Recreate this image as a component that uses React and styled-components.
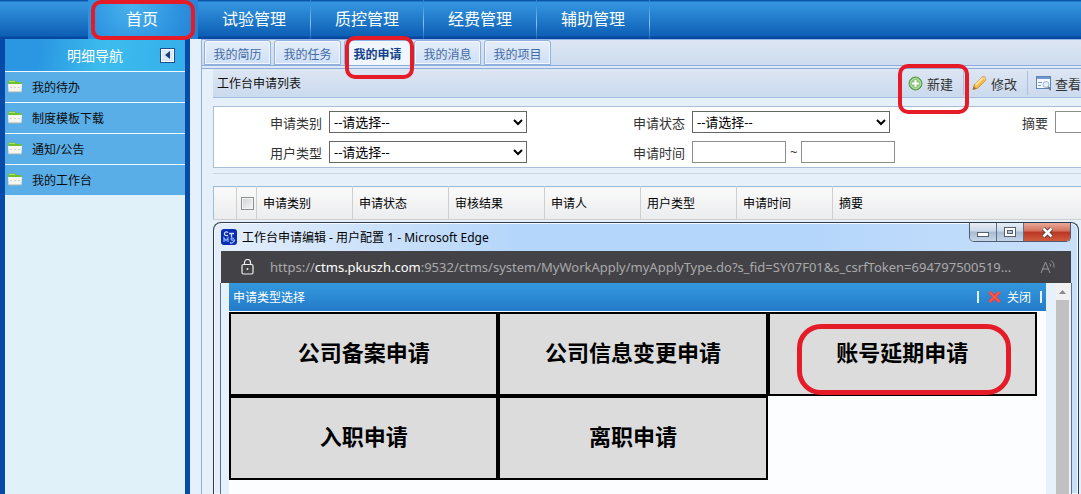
import React from "react";
import styled, { createGlobalStyle, css } from "styled-components";

const GlobalStyle = createGlobalStyle`
    * {
        box-sizing: border-box;
    }
    body {
        margin: 0;
        overflow: hidden;
        font-family: "Noto Sans", "Noto Sans CJK SC", sans-serif;
        font-size: 12px;
        color: #111;
    }
    button, input, select {
        font-family: inherit;
        margin: 0;
    }
`;

const Page = styled.div`
    position: relative;
    display: flex;
    flex-direction: column;
    height: 100vh;
    overflow: hidden;
    background: #e6f0fa;
`;

// hand drawn red frame around the thing to click
const Mark = styled.span`
    position: absolute;
    z-index: 5;
    inset: ${({ $inset }) => $inset};
    border: ${({ $wide }) => ($wide ? "5px" : "4px")} solid #e51c28;
    border-radius: ${({ $wide }) => ($wide ? "24px" : "10px")};
    pointer-events: none;
`;

/* top navigation */

const TopNav = styled.nav`
    display: flex;
    flex: none;
    height: 39px;
    padding-left: 88px;
    background: linear-gradient(#0a56a8 0, #0a56a8 1px, #3595e0 2px, #2580cf 16px, #0d5fb4 36px, #0847a0 37px);
`;

const TopLink = styled.a`
    position: relative;
    display: flex;
    align-items: center;
    justify-content: center;
    width: 113px;
    padding-bottom: 4px;
    font-size: 16px;
    color: #fff;
    text-decoration: none;
    border-right: 1px solid #5da4dd;
    border-image: linear-gradient(#2580cf, #8cc2ec 60%, #0d5fb4) 1;
    ${({ $active }) =>
        $active &&
        css`
            width: 110px;
            padding-right: 2px;
            border: 0;
            background: radial-gradient(circle at 40% 10%, #48b4ee, #2e93e0 60%, #237fd2);
        `}
`;

const Body = styled.div`
    display: flex;
    flex: 1;
    min-height: 0;
`;

/* side menu */

const Side = styled.aside`
    flex: none;
    width: 190px;
    background: #e1f1fa;
    border: solid #064ba9;
    border-width: 0 5px;
`;

const SideHead = styled.div`
    display: flex;
    align-items: center;
    height: 32px;
    padding: 0 10px 0 62px;
    font-size: 14px;
    color: #fff;
    background: linear-gradient(100deg, #2b97e2 20%, #3cbdee 55%, #35aeea 100%);
`;

const Fold = styled.button`
    display: flex;
    align-items: center;
    justify-content: center;
    width: 15px;
    height: 15px;
    margin-left: auto;
    padding: 0;
    background: #d9e9fa;
    border: 1px solid #1c4f8c;
    box-shadow: inset 0 0 0 1px #fff;
`;

const SideList = styled.ul`
    margin: 0;
    padding: 0;
    list-style: none;
`;

const SideLink = styled.a`
    display: flex;
    align-items: center;
    gap: 9px;
    height: 31px;
    padding-left: 3px;
    color: #0b0b0b;
    text-decoration: none;
    background: #5aaee8;
    border-top: 1px solid #f2f9fe;
`;

/* work area */

const Main = styled.main`
    flex: 1;
    min-width: 0;
    margin-left: 11px;
    border-left: 1px solid #8fb0db;
`;

const Tabs = styled.div`
    display: flex;
    align-items: flex-end;
    gap: 3px;
    height: 30px;
    padding: 0 2px 3px;
    border-top: 1px solid #8fb5ea;
    border-bottom: 1px solid #8fabd8;
    background: linear-gradient(#dde6f3, #cddcef 25px, #8fabd8 25px, #8fabd8 26px, #dce9f8 26px);
`;

const Tab = styled.button`
    position: relative;
    width: 67px;
    height: 25px;
    padding: 2px 0 0;
    font-size: 12px;
    color: #416aa3;
    background: linear-gradient(#e5eefa, #cfe0f7);
    border: 1px solid #8fb0e0;
    border-radius: 3px 3px 0 0;
    box-shadow: inset 0 0 0 1px #f3f8fe;
    ${({ $active }) =>
        $active &&
        css`
            font-weight: 700;
            color: #15428b;
            background: #f0f6fe;
            border-bottom-color: #f0f6fe;
        `}
`;

const Panel = styled.section`
    margin: 0 -11px 0 11px;
`;

const Toolbar = styled.div`
    display: flex;
    align-items: center;
    height: 29px;
    padding-left: 4px;
    background: linear-gradient(#dde6f3, #cbdaee);
    border-bottom: 1px solid #a3bcdf;
`;

const Actions = styled.div`
    display: flex;
    align-items: center;
    margin-left: auto;
`;

const ToolButton = styled.button`
    position: relative;
    display: flex;
    align-items: center;
    gap: 4px;
    width: 64px;
    height: 24px;
    padding: 0 0 0 8px;
    font-size: 13px;
    white-space: nowrap;
    color: #333;
    background: none;
    border: 0;
    border-right: 1px solid #a9c0df;
    svg {
        flex: none;
    }
`;

const Filters = styled.form`
    display: grid;
    grid-template-columns: repeat(3, 363px);
    row-gap: 8px;
    margin-top: 8px;
    padding: 4px 0 4px;
    font-size: 13px;
    color: #333;
    background: #fff;
    border: 1px solid #a9bfd8;
    overflow: hidden;
`;

const Field = styled.div`
    display: flex;
    align-items: center;
    gap: 7px;
    height: 22px;
    label {
        width: 108px;
        text-align: right;
    }
`;

const Select = styled.select`
    width: 198px;
    height: 22px;
    padding: 0;
    font-size: 13px;
    color: #000;
    background: #fff;
    border: 1px solid #666;
    border-radius: 0;
`;

const TextBox = styled.input`
    width: ${({ $wide }) => ($wide ? "198px" : "94px")};
    height: 22px;
    border: 1px solid #8d8d8d;
`;

const Range = styled.div`
    display: flex;
    align-items: center;
    gap: 4px;
`;

const Rule = styled.hr`
    height: 1px;
    margin: 5px 0 12px;
    background: #cbd5de;
    border: 0;
`;

const Grid = styled.table`
    width: 100%;
    table-layout: fixed;
    border-collapse: collapse;
    border-top: 1px solid #9dbbdd;
    border-left: 1px solid #9dbbdd;
    th {
        height: 33px;
        padding: 0 0 0 6px;
        font-weight: 400;
        text-align: left;
        color: #000;
        background: linear-gradient(#fafafa, #ebecee);
        border-right: 1px solid #cfcfcf;
        border-bottom: 1px solid #cfcfcf;
    }
`;

const Col = styled.col`
    width: ${({ $w }) => $w};
`;

const Check = styled.input`
    display: block;
    appearance: none;
    width: 13px;
    height: 13px;
    margin: 0 0 0 -2px;
    background: linear-gradient(135deg, #cfd3d6, #f6f6f6);
    border: 1px solid #8e8f8f;
    box-shadow: inset 0 0 0 1px #f4f4f4;
`;

/* popup browser window */

const Popup = styled.section`
    position: absolute;
    z-index: 2;
    top: 222px;
    right: 2px;
    bottom: 0;
    left: 213px;
    display: flex;
    flex-direction: column;
    padding: 0 7px;
    background: linear-gradient(90deg, #e4eefa, #b5d6fb 35%, #b5d6fb 70%, #c9e0fa);
    border: 1px solid #2f3c4d;
    border-bottom: 0;
    border-radius: 8px 8px 0 0;
    box-shadow: inset 0 0 0 1px #f2f8fe;
`;

const TitleBar = styled.header`
    display: flex;
    flex: none;
    align-items: center;
    gap: 5px;
    height: 28px;
    color: #000;
    white-space: nowrap;
`;

const WinButtons = styled.div`
    display: flex;
    align-self: flex-start;
    margin-left: auto;
    border: 1px solid #4e5d70;
    border-top: 0;
    border-radius: 0 0 5px 5px;
    overflow: hidden;
`;

const WinButton = styled.button`
    display: flex;
    align-items: center;
    justify-content: center;
    width: ${({ $close }) => ($close ? "46px" : "27px")};
    height: 18px;
    padding: 0;
    border: 0;
    border-right: ${({ $close }) => ($close ? "0" : "1px solid #5f6d80")};
    background: ${({ $close }) =>
        $close
            ? "linear-gradient(#e8a99a, #d4705c 45%, #b93624 50%, #cf5a3d)"
            : "linear-gradient(#e6edf6, #cbd8e8 45%, #a9bbd1 50%, #c6d6e9)"};
`;

const Address = styled.div`
    display: flex;
    flex: none;
    align-items: center;
    height: 32px;
    padding: 0 14px 0 20px;
    font-size: 13px;
    color: #a9a9ab;
    background: #434347;
    svg {
        flex: none;
    }
    b {
        font-weight: 400;
        color: #fff;
    }
`;

const Url = styled.span`
    flex: 1;
    min-width: 0;
    margin-left: 15px;
    white-space: nowrap;
`;

const View = styled.div`
    display: flex;
    flex: 1;
    min-height: 0;
    margin: 0 -1px;
    padding-left: 8px;
    background: #e6f1fb;
    border: solid #5b7289;
    border-width: 0 1px;
`;

const Sheet = styled.div`
    flex: 1;
    background: #fbfdff;
`;

const SheetHead = styled.div`
    display: flex;
    align-items: center;
    height: 28px;
    padding: 0 4px;
    color: #fff;
    background: linear-gradient(#3398dd, #247bc9);
`;

const CloseGroup = styled.div`
    display: flex;
    align-items: center;
    gap: 9px;
    margin-left: auto;
`;

const CloseButton = styled.button`
    display: flex;
    align-items: center;
    gap: 6px;
    padding: 0;
    font-size: 12px;
    color: #fff;
    background: none;
    border: 0;
`;

const Bar = styled.i`
    width: 2px;
    height: 12px;
    background: #e8f3fc;
`;

const Tiles = styled.div`
    display: grid;
    grid-template-columns: repeat(3, 1fr);
    margin: 1px 9px 0 0;
`;

const Tile = styled.button`
    position: relative;
    height: 84px;
    padding: 0 0 6px;
    font-size: 22px;
    font-weight: 700;
    color: #000;
    background: #dcdcdc;
    border: 2px solid #000;
`;

const Scroll = styled.div`
    display: flex;
    flex: none;
    flex-direction: column;
    gap: 6px;
    width: 15px;
    margin-left: 10px;
    padding: 7px 2px 0 0;
    background: #f1f1f1;
    svg {
        align-self: center;
    }
`;

const Thumb = styled.div`
    flex: 1;
    background: #c1c1c1;
`;

const FolderIcon = () => (
    <svg width="15" height="16" viewBox="0 0 15 16">
        <path d="M0.500 1.500h7l1 1.500h5V7h-13z" fill="#6fbf2e" />
        <path d="M1 2h6v1H1z" fill="#a9e066" />
        <path d="M0 5h14l-.5 8h-13z" fill="#f6f5ee" />
        <path d="M1 13h13" stroke="#9db3b8" />
        <path d="M2 8.500h2M6 8.500h2M10 8.500h2" stroke="#dccfd0" />
    </svg>
);

const AddIcon = () => (
    <svg width="15" height="15" viewBox="0 0 15 15">
        <circle cx="7.5" cy="7.5" r="6.500" fill="#6db35a" stroke="#5a9a4c" />
        <circle cx="7.5" cy="7.5" r="5" fill="#86c573" stroke="#c4e6b8" />
        <path d="M7.500 4v7M4 7.500h7" stroke="#fff" strokeWidth="2" />
    </svg>
);

const PencilIcon = () => (
    <svg width="15" height="16" viewBox="0 0 16 16">
        <path d="M1 15l1.500-5L11 1.500q2-1 3 .5t.5 3L6 13.500z" fill="#f5bd49" stroke="#c98624" />
        <path d="M4 10l7.500-7.500" stroke="#ffe7a0" strokeWidth="2" />
        <path d="M10.500 2.500l3 3 1.500-2-2.500-2.500z" fill="#f3c98f" />
        <path d="M1 15l1-3.500 2.500 2.500z" fill="#8a7152" />
    </svg>
);

const ViewIcon = () => (
    <svg width="15" height="15" viewBox="0 0 15 15">
        <rect x="0.500" y="0.500" width="14" height="12" fill="#f5f9fe" stroke="#5b83b8" />
        <path d="M1 1h13v2H1z" fill="#6f9bd0" />
        <path d="M2 6.500h4M2 9.500h3" stroke="#7d9fcb" />
        <circle cx="10" cy="8.500" r="3" fill="#e4effa" stroke="#9fb4cc" />
        <path d="M12 11l3 3" stroke="#6f7c8e" strokeWidth="2" />
    </svg>
);

const LogoIcon = () => (
    <svg width="16" height="16" viewBox="0 0 16 16">
        <rect width="16" height="16" rx="3" fill="#0a2cb0" />
        <path d="M7 3.500Q4 2 3.500 4.500T7 6.500M8 4.500h5M10.500 4.500v4" fill="none" stroke="#cfe0ff" strokeWidth="1.300" />
        <path d="M3 13V9l2 2.500L7 9v4M13 9.500q-3-1-3 .5t2.500 1-.5 2.200-2.500-.4" fill="none" stroke="#8fb4f8" strokeWidth="1.200" />
    </svg>
);

const LockIcon = () => (
    <svg width="14" height="16" viewBox="0 0 14 16" fill="none" stroke="#f0f0f0" strokeWidth="1.200">
        <rect x="1" y="5.500" width="11" height="9.500" rx="1.500" />
        <path d="M3.500 5.500V3.500a3 3 0 0 1 6 0v2" />
        <circle cx="6.500" cy="10" r="1" fill="#f0f0f0" stroke="none" />
    </svg>
);

const ReadIcon = () => (
    <svg width="17" height="16" viewBox="0 0 17 16" fill="none" stroke="#98989b">
        <path d="M1 14L5.500 3 10 14M2.500 10h6" />
        <path d="M9.500 4.500q1.500 1 1 3M11 1.500q4 2.500 3 7" />
    </svg>
);

const CrossIcon = () => (
    <svg width="13" height="12" viewBox="0 0 13 12">
        <path d="M1.500 1l10 10M11.500 1l-10 10" stroke="#f0403c" strokeWidth="3.500" />
        <path d="M1.500 1l10 10M11.500 1l-10 10" stroke="#ff6f62" strokeWidth="1" />
    </svg>
);

const topItems = ["首页", "试验管理", "质控管理", "经费管理", "辅助管理"];
const sideItems = ["我的待办", "制度模板下载", "通知/公告", "我的工作台"];
const tabItems = ["我的简历", "我的任务", "我的申请", "我的消息", "我的项目"];
const columns = ["申请类别", "申请状态", "审核结果", "申请人", "用户类型", "申请时间", "摘要"];
const applyTypes = ["公司备案申请", "公司信息变更申请", "账号延期申请", "入职申请", "离职申请"];

function SelectField({ id, label }) {
    return (
        <Field>
            <label htmlFor={id}>{label}</label>
            <Select id={id}>
                <option>--请选择--</option>
            </Select>
        </Field>
    );
}

function ApplyWindow() {
    return (
        <Popup>
            <TitleBar>
                <LogoIcon />
                <span>工作台申请编辑 - 用户配置 1 - Microsoft Edge</span>
                <WinButtons>
                    <WinButton aria-label="最小化">
                        <svg width="12" height="9" viewBox="0 0 12 9">
                            <rect x="0.500" y="4.500" width="11" height="4" fill="#fff" stroke="#555f6e" />
                        </svg>
                    </WinButton>
                    <WinButton aria-label="最大化">
                        <svg width="12" height="10" viewBox="0 0 12 10">
                            <rect x="0.500" y="0.500" width="11" height="9" fill="#fff" stroke="#555f6e" />
                            <rect x="3.500" y="3.500" width="5" height="3" fill="#b5c5d9" stroke="#555f6e" />
                        </svg>
                    </WinButton>
                    <WinButton $close aria-label="关闭窗口">
                        <svg width="13" height="11" viewBox="0 0 13 11">
                            <path d="M2.500 1.500l8 8M10.500 1.500l-8 8" stroke="#5c3a3a" strokeWidth="4.500" />
                            <path d="M2.500 1.500l8 8M10.500 1.500l-8 8" stroke="#fff" strokeWidth="2.500" />
                        </svg>
                    </WinButton>
                </WinButtons>
            </TitleBar>
            <Address>
                <LockIcon />
                <Url>
                    https://<b>ctms.pkuszh.com</b>:9532/ctms/system/MyWorkApply/myApplyType.do?s_fid=SY07F01&amp;s_csrfToken=694797500519...
                </Url>
                <ReadIcon />
            </Address>
            <View>
                <Sheet>
                    <SheetHead>
                        申请类型选择
                        <CloseGroup>
                            <Bar />
                            <CloseButton>
                                <CrossIcon />
                                关闭
                            </CloseButton>
                            <Bar />
                        </CloseGroup>
                    </SheetHead>
                    <Tiles>
                        {applyTypes.map((name) => (
                            <Tile key={name}>
                                {name}
                                {name === "账号延期申请" && <Mark $wide $inset="10px 24px -1px 27px" />}
                            </Tile>
                        ))}
                    </Tiles>
                </Sheet>
                <Scroll>
                    <svg width="7" height="4" viewBox="0 0 7 4">
                        <path d="M0 4l3.500-4L7 4z" fill="#8b8b8b" />
                    </svg>
                    <Thumb />
                </Scroll>
            </View>
        </Popup>
    );
}

export default function App() {
    return (
        <Page>
            <GlobalStyle />
            <TopNav>
                {topItems.map((name, i) => (
                    <TopLink href="#" key={name} $active={i === 0}>
                        {name}
                        {i === 0 && <Mark $inset="0 3px -1px 3px" />}
                    </TopLink>
                ))}
            </TopNav>
            <Body>
                <Side>
                    <SideHead>
                        明细导航
                        <Fold aria-label="收起">
                            <svg width="5" height="8" viewBox="0 0 5 8">
                                <path d="M5 0v8L0 4z" fill="#1b3f73" />
                            </svg>
                        </Fold>
                    </SideHead>
                    <SideList>
                        {sideItems.map((name) => (
                            <li key={name}>
                                <SideLink href="#">
                                    <FolderIcon />
                                    {name}
                                </SideLink>
                            </li>
                        ))}
                    </SideList>
                </Side>
                <Main>
                    <Tabs>
                        {tabItems.map((name) => (
                            <Tab key={name} $active={name === "我的申请"}>
                                {name}
                                {name === "我的申请" && <Mark $inset="-5px -4px -15px 0" />}
                            </Tab>
                        ))}
                    </Tabs>
                    <Panel>
                        <Toolbar>
                            工作台申请列表
                            <Actions>
                                <ToolButton>
                                    <AddIcon />
                                    新建
                                    <Mark $inset="-7px -6px -19px -2px" />
                                </ToolButton>
                                <ToolButton>
                                    <PencilIcon />
                                    修改
                                </ToolButton>
                                <ToolButton>
                                    <ViewIcon />
                                    查看
                                </ToolButton>
                            </Actions>
                        </Toolbar>
                        <Filters>
                            <SelectField id="kind" label="申请类别" />
                            <SelectField id="status" label="申请状态" />
                            <Field>
                                <label htmlFor="summary">摘要</label>
                                <TextBox id="summary" $wide />
                            </Field>
                            <SelectField id="userType" label="用户类型" />
                            <Field>
                                <label htmlFor="from">申请时间</label>
                                <Range>
                                    <TextBox id="from" />
                                    ~
                                    <TextBox aria-label="申请时间止" />
                                </Range>
                            </Field>
                        </Filters>
                        <Rule />
                        <Grid>
                            <colgroup>
                                <Col $w="23px" />
                                <Col $w="20px" />
                                {columns.map((name) => (
                                    <Col key={name} $w={name === "摘要" ? "auto" : "96px"} />
                                ))}
                            </colgroup>
                            <thead>
                                <tr>
                                    <th />
                                    <th>
                                        <Check type="checkbox" aria-label="全选" />
                                    </th>
                                    {columns.map((name) => (
                                        <th key={name}>{name}</th>
                                    ))}
                                </tr>
                            </thead>
                        </Grid>
                    </Panel>
                </Main>
            </Body>
            <ApplyWindow />
        </Page>
    );
}
